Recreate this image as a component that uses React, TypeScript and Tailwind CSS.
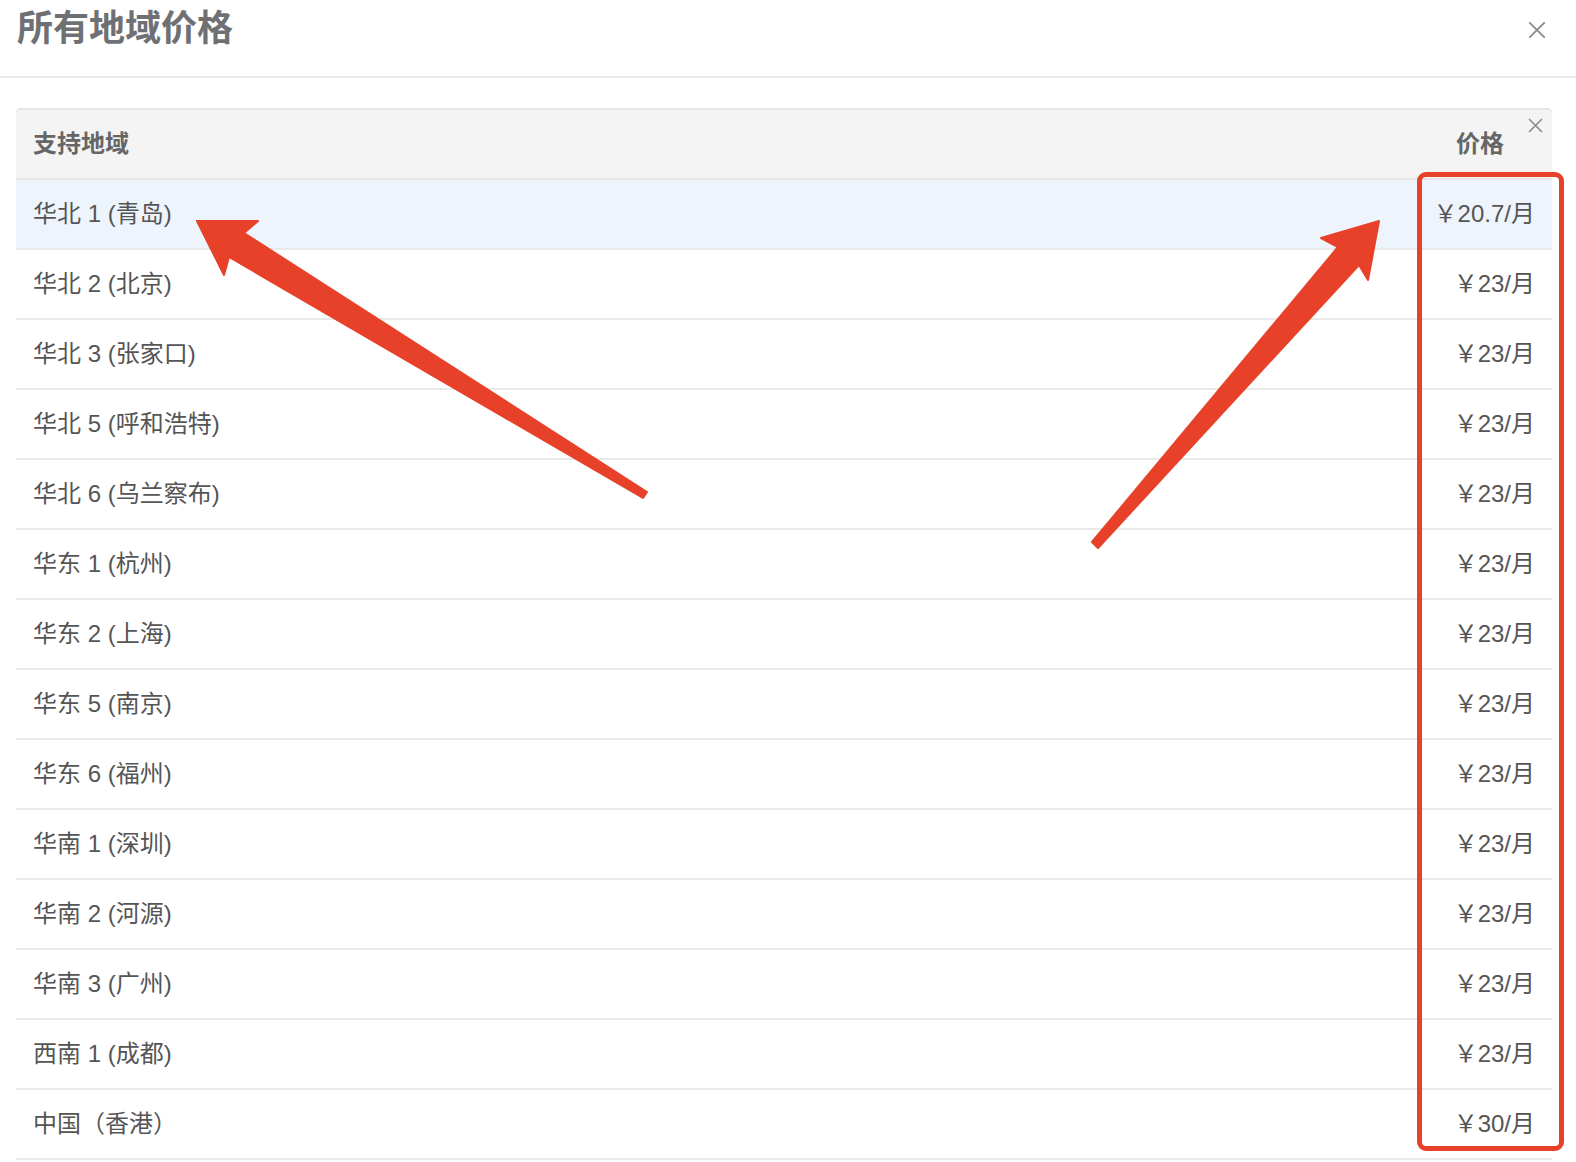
import { Fragment } from 'react';

const rows: [string, string][] = [
  ['华北 1 (青岛)', '20.7'],
  ['华北 2 (北京)', '23'],
  ['华北 3 (张家口)', '23'],
  ['华北 5 (呼和浩特)', '23'],
  ['华北 6 (乌兰察布)', '23'],
  ['华东 1 (杭州)', '23'],
  ['华东 2 (上海)', '23'],
  ['华东 5 (南京)', '23'],
  ['华东 6 (福州)', '23'],
  ['华南 1 (深圳)', '23'],
  ['华南 2 (河源)', '23'],
  ['华南 3 (广州)', '23'],
  ['西南 1 (成都)', '23'],
  ['中国（香港）', '30'],
];

function CloseIcon({ size, stroke }: { size: number; stroke: number }) {
  return (
    <svg width={size} height={size} viewBox="0 0 20 20" fill="none" stroke="#8a8a8a" strokeWidth={stroke} strokeLinecap="round">
      <path d="M2 2L18 18M18 2L2 18" />
    </svg>
  );
}

// 스크린샷 위에 그려진 빨간 화살표 두 개
function Arrows() {
  return (
    <svg className="pointer-events-none absolute left-0 top-0" width={1576} height={1162}>
      <g fill="#e8412a" stroke="#e8412a" strokeWidth={2} strokeLinejoin="round">
        <polygon points="197,221 258,221 244,233 647,492 643,498 229,257 224,275" />
        <polygon points="1379,221 1368,280 1359,265 1098,548 1092,542 1338,247 1321,238" />
      </g>
    </svg>
  );
}

export default function App() {
  return (
    <div
      className="relative h-[1162px] w-[1576px] overflow-hidden bg-white"
      style={{ fontFamily: '"Liberation Sans", "Noto Sans CJK SC", sans-serif' }}
    >
      <div className="flex h-[78px] items-start justify-between border-b-2 border-[#e9e9e9] pl-[17px] pr-[30px]">
        <h1 className="text-[36px] font-bold leading-[58px] text-[#6e7073]">所有地域价格</h1>
        <div className="mt-[21px]">
          <CloseIcon size={18} stroke={2} />
        </div>
      </div>

      <div className="ml-4 mt-[30px] w-[1536px]">
        <div className="relative flex h-[72px] items-center justify-between rounded-t-[5px] border-y-2 border-[#e6e6e6] bg-[#f4f4f4] pl-[17px] pr-[48px] text-[24px] font-bold text-[#666]">
          <span>支持地域</span>
          <span>价格</span>
          <div className="absolute right-[9px] top-[8px]">
            <CloseIcon size={15} stroke={2.2} />
          </div>
        </div>
        {rows.map(([name, price], i) => (
          <Fragment key={name}>
            <div
              className={`flex h-[70px] items-center justify-between border-b-2 border-[#e9e9e9] pl-[17px] pr-[17px] text-[24px] text-[#555] ${
                i === 0 ? 'bg-[#edf4fb]' : 'bg-white'
              }`}
            >
              <span>{name}</span>
              <span>￥{price}/月</span>
            </div>
          </Fragment>
        ))}
      </div>

      <div className="pointer-events-none absolute left-[1417px] top-[172px] h-[979px] w-[147px] rounded-[9px] border-[5px] border-[#e8412a]" />
      <Arrows />
    </div>
  );
}
